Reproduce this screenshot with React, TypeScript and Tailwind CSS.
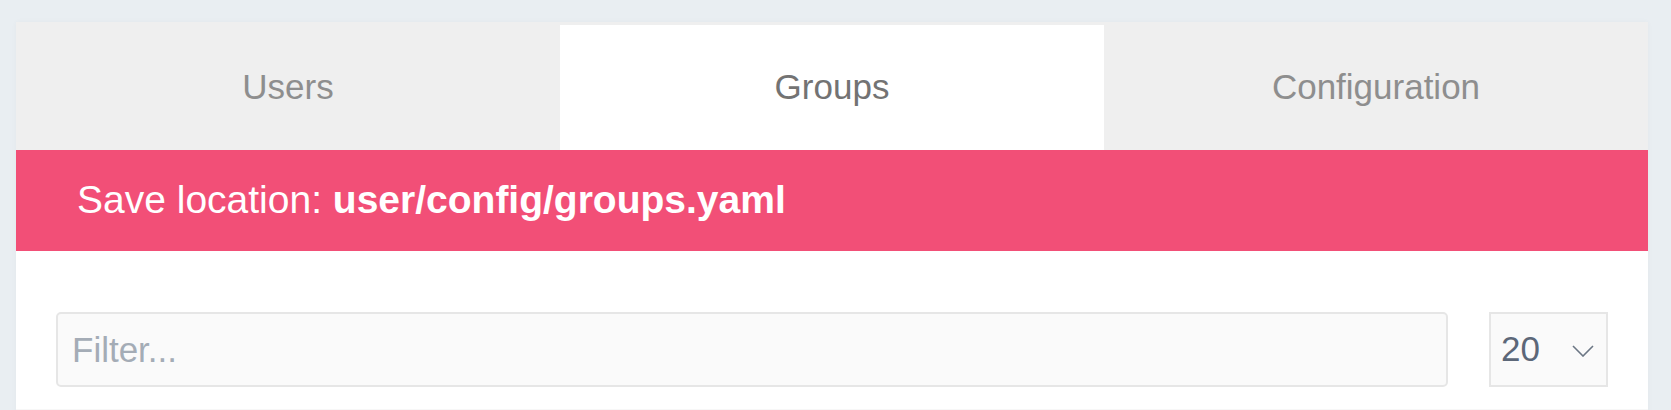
import { useState } from "react";

const tabs = ["Users", "Groups", "Configuration"];

export default function App() {
  const [active, setActive] = useState("Groups");
  const [filter, setFilter] = useState("");
  const [perPage, setPerPage] = useState("20");

  return (
    <div
      className="min-h-[410px] bg-[#e9eef2] pt-[22px] pl-4 pr-[23px]"
      style={{ fontFamily: '"Liberation Sans", Arial, sans-serif' }}
    >
      <div className="bg-white shadow-[0_0_6px_rgba(0,0,0,0.03)]">
        {/* tabs */}
        <div className="grid grid-cols-3 bg-[#efefef] h-[128px]">
          {tabs.map((tab) => (
            <button
              key={tab}
              type="button"
              onClick={() => setActive(tab)}
              className={
                tab === active
                  ? "mt-[3px] bg-white text-[35px] text-[#737373] flex items-center justify-center"
                  : "mt-[3px] text-[35px] text-[#8e8e8e] flex items-center justify-center"
              }
            >
              {tab}
            </button>
          ))}
        </div>

        {/* save location */}
        <div className="h-[101px] bg-[#f24f77] flex items-center pl-[61px] text-white text-[39px]">
          <span>
            Save location: <b className="font-bold">user/config/groups.yaml</b>
          </span>
        </div>

        {/* filter row */}
        <div className="flex items-center gap-[41px] pt-[61px] pb-[22px] pl-[40px] pr-[40px]">
          <input
            value={filter}
            onChange={(e) => setFilter(e.target.value)}
            placeholder="Filter..."
            className="flex-1 h-[75px] px-[14px] rounded-[5px] border-2 border-[#e6e6e6] bg-[#fafafa] text-[35px] text-[#5c6778] placeholder:text-[#a4acb6] outline-none"
          />
          <div className="relative w-[119px] h-[75px] border-2 border-[#e6e6e6] bg-[#fafafa]">
            <select
              value={perPage}
              onChange={(e) => setPerPage(e.target.value)}
              className="appearance-none w-full h-full bg-transparent pl-[10px] text-[35px] text-[#5c6778] outline-none"
            >
              <option value="10">10</option>
              <option value="20">20</option>
              <option value="50">50</option>
              <option value="100">100</option>
            </select>
            <svg
              className="absolute right-[12px] top-[31px] pointer-events-none"
              width="22"
              height="12"
              viewBox="0 0 22 12"
              fill="none"
            >
              <path d="M1 1l10 10 10-10" stroke="#6b7684" strokeWidth="1.6" />
            </svg>
          </div>
        </div>

        <div className="h-[6px] bg-[#f7f7f7]" />
      </div>
    </div>
  );
}
